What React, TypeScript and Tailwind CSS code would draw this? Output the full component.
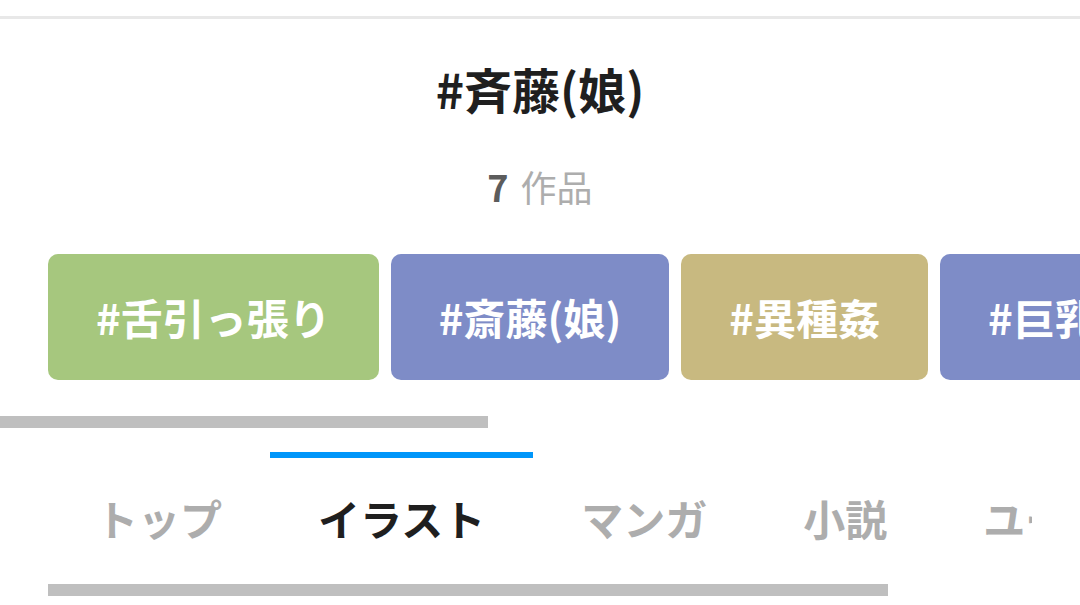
const tags = [
  { label: '#舌引っ張り', color: 'bg-[#a6c77e]' },
  { label: '#斎藤(娘)', color: 'bg-[#7e8cc7]' },
  { label: '#異種姦', color: 'bg-[#c8b980]' },
  { label: '#巨乳', color: 'bg-[#7e8cc7]' },
];

const tabs = ['トップ', 'イラスト', 'マンガ', '小説', 'ユーザー'];

export default function App() {
  const active = 'イラスト';

  return (
    <div className="w-[1080px] h-[605px] overflow-hidden bg-white font-['Noto_Sans_CJK_JP',sans-serif]">
      <div className="h-[16px]" />
      <div className="h-[3px] bg-[#e8e8e8]" />

      {/* Tag header */}
      <h1 className="mt-[41px] text-center text-[48px] leading-[56px] font-bold text-[#1f1f1f]">#斉藤(娘)</h1>
      <p className="mt-[48px] text-center text-[36px] leading-[44px]">
        <span className="font-bold text-[#5c5c5c]">7</span>
        <span className="ml-[12px] text-[#adadad]">作品</span>
      </p>

      {/* Related tags */}
      <div className="mt-[46px] flex gap-3 pl-12 overflow-hidden">
        {tags.map((t) => (
          <div
            key={t.label}
            className={`${t.color} h-[126px] shrink-0 rounded-[10px] px-12 flex items-center text-white text-[42px] font-bold leading-[50px] whitespace-nowrap`}
          >
            {t.label}
          </div>
        ))}
      </div>
      <div className="mt-[36px] h-[12px] w-[488px] bg-[#bfbfbf]" />

      {/* Tabs */}
      <div className="mt-[24px] mx-12 flex overflow-hidden">
        {tabs.map((tab) => (
          <div key={tab} className="shrink-0 flex flex-col">
            <div className={`h-[6px] ${tab === active ? 'bg-[#0096fa]' : 'bg-transparent'}`} />
            <div
              className={`px-12 pt-[35px] text-[42px] leading-[50px] font-bold whitespace-nowrap ${
                tab === active ? 'text-[#1f1f1f]' : 'text-[#adadad]'
              }`}
            >
              {tab}
            </div>
          </div>
        ))}
      </div>
      <div className="mt-[41px] ml-12 h-[12px] w-[840px] bg-[#bfbfbf]" />
    </div>
  );
}
